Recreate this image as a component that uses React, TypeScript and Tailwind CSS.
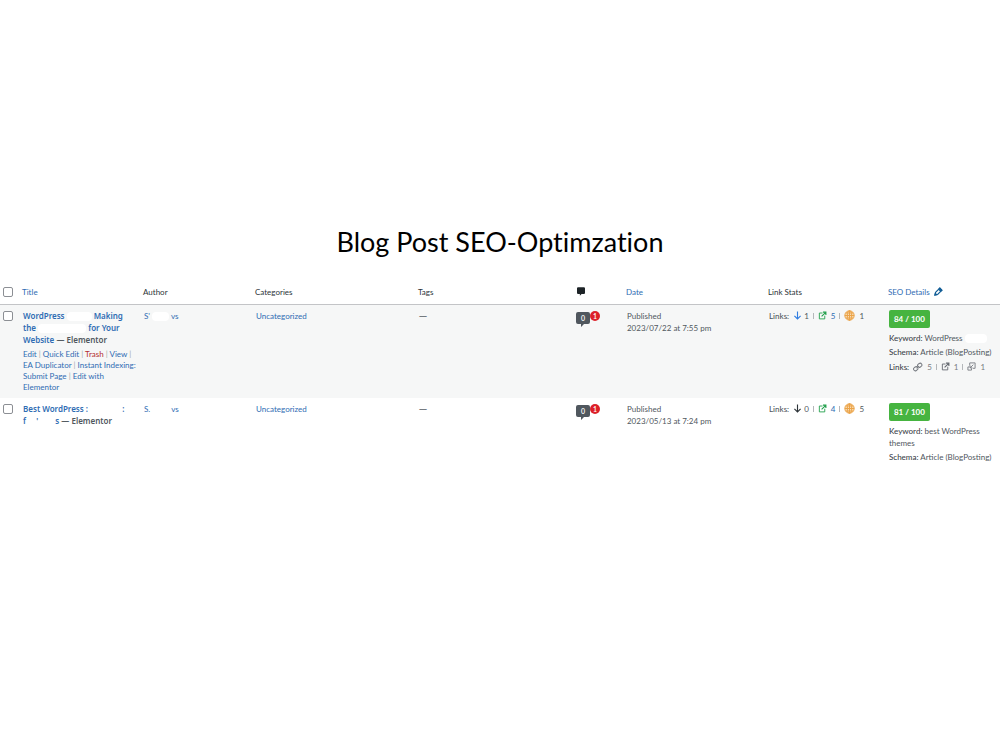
import type { ReactNode } from "react";

const Gap = ({ className }: { className: string }) => (
  <span className={`inline-block h-[9px] rounded-sm bg-white align-middle ${className}`} />
);

const Sep = () => <span className="text-[#a7aaad]"> | </span>;

const Bar = () => <span className="h-[6px] w-px bg-[#b4b7ba]" />;

const DownArrow = ({ className }: { className: string }) => (
  <svg viewBox="0 0 16 16" className={`size-[9px] ${className}`} fill="none" stroke="currentColor" strokeWidth="2">
    <path d="M8 1v13M2.500 8.500 8 14l5.500-5.500" />
  </svg>
);

const ExternalIcon = ({ className }: { className: string }) => (
  <svg viewBox="0 0 20 20" className={`size-[9px] ${className}`} fill="none" stroke="currentColor">
    <path d="M10 4.500H3v13h12v-7" strokeWidth="2" />
    <path d="M8 12 16 4M11 2.500h6.500V9" strokeWidth="2.500" />
  </svg>
);

const InboundIcon = () => (
  <svg viewBox="0 0 20 20" className="size-[9px]" fill="none" stroke="currentColor" strokeWidth="2">
    <path d="M6 8V2h12v12h-5M6 11H2v7h8v-4M14 6l-7 7M7 8v5h5" />
  </svg>
);

const GlobeIcon = () => (
  <svg viewBox="0 0 20 20" className="size-[11px]" fill="none" stroke="#eba348" strokeWidth="1.800">
    <circle cx="10" cy="10" r="8.500" fill="#f8dcb4" />
    <ellipse cx="10" cy="10" rx="4" ry="8.500" />
    <path d="M10 1v18M1.500 10h17M3 5.500h14M3 14.500h14" />
  </svg>
);

const LinkIcon = () => (
  <svg viewBox="0 0 20 20" className="size-[10px]" fill="none" stroke="currentColor" strokeWidth="2">
    <rect x="1" y="10" width="9" height="7" rx="3.500" transform="rotate(-35 5.500 13.500)" />
    <rect x="9" y="3" width="9" height="7" rx="3.500" transform="rotate(-35 13.500 6.500)" />
    <path d="m7 12 5-4" />
  </svg>
);

const PencilIcon = () => (
  <svg viewBox="0 0 20 20" className="size-[9px]" fill="none" stroke="#135e96" strokeWidth="2.500">
    <path d="m2 18 1.500-6L13 2.500l4.500 4.500L8 16.500z" />
    <path d="m10.500 5 4.500 4.500L17.500 7 13 2.500z" fill="#135e96" />
    <path d="m2 18 1-4 3 3z" fill="#135e96" />
  </svg>
);

const CommentIcon = ({ className }: { className: string }) => (
  <svg viewBox="0 0 14 15" className={className} fill="currentColor">
    <path d="M2 0h10a2 2 0 0 1 2 2v8a2 2 0 0 1-2 2H8l-3 3v-3H2a2 2 0 0 1-2-2V2a2 2 0 0 1 2-2z" />
  </svg>
);

const Checkbox = ({ label }: { label: string }) => (
  <input
    type="checkbox"
    aria-label={label}
    className="block size-[10px] appearance-none rounded-[2px] border border-[#8c8f94] bg-white checked:bg-[#2271b1]"
  />
);

const A = ({ children, className = "text-[#2f6cb3]" }: { children: ReactNode; className?: string }) => (
  <a href="#" className={className}>
    {children}
  </a>
);

const posts = [
  {
    id: 1,
    title: (
      <>
        <A>
          WordPress <Gap className="w-[25px]" /> Making
          <br />
          the <Gap className="w-[48px]" /> for Your
          <br />
          Website
        </A>{" "}
        — Elementor
      </>
    ),
    actions: true,
    author: ["S'", "vs"],
    time: "2023/07/22 at 7:55 pm",
    arrow: "text-[#2f7de1]",
    links: [1, 5, 1],
    score: "84 / 100",
    keyword: (
      <>
        WordPress <Gap className="w-[22px]" />
      </>
    ),
    seoLinks: [5, 1, 1],
  },
  {
    id: 2,
    title: (
      <>
        <A>
          Best WordPress : <Gap className="w-[30px]" /> :
          <br />
          f <Gap className="w-[6px]" /> ' <Gap className="w-[13px]" /> s
        </A>{" "}
        — Elementor
      </>
    ),
    actions: false,
    author: ["S.", "vs"],
    time: "2023/05/13 at 7:24 pm",
    arrow: "text-[#2c3338]",
    links: [0, 4, 5],
    score: "81 / 100",
    keyword: (
      <>
        best WordPress
        <br />
        themes
      </>
    ),
    seoLinks: null,
  },
];

const App = () => {
  return (
    <div className="min-h-screen bg-white pt-[224px] font-['Lato',sans-serif] text-[8px] leading-[12px] text-[#50575e]">
      <h1 className="text-center text-[27px] leading-[36px] text-black [font-variant-ligatures:none]">
        Blog Post SEO-Optimzation
      </h1>
      <table className="mt-[20px] w-full table-fixed border-collapse text-left">
        <colgroup>
          <col className="w-[1.900%]" />
          <col className="w-[12.100%]" />
          <col className="w-[11.200%]" />
          <col className="w-[16.300%]" />
          <col className="w-[15.700%]" />
          <col className="w-[5.100%]" />
          <col className="w-[14.200%]" />
          <col className="w-[12%]" />
          <col />
        </colgroup>
        <thead>
          <tr className="h-[24px] border-b border-[#c3c4c7] text-[#2c3338] *:p-0 *:pl-[3px] *:font-normal">
            <th>
              <Checkbox label="Select all" />
            </th>
            <th>
              <A>Title</A>
            </th>
            <th>Author</th>
            <th>Categories</th>
            <th>Tags</th>
            <th aria-label="Comments">
              <CommentIcon className="ml-[2px] h-[9px] w-[8px] text-[#1d2327]" />
            </th>
            <th>
              <A>Date</A>
            </th>
            <th>Link Stats</th>
            <th>
              <div className="flex items-center gap-1">
                <A>SEO Details</A>
                <PencilIcon />
              </div>
            </th>
          </tr>
        </thead>
        <tbody>
          {posts.map((post) => (
            <tr
              key={post.id}
              className="align-top odd:bg-[#f6f7f7] *:p-0 *:pt-[5px] *:pb-[5px] *:pl-[4px] *:first:pt-[6px] *:first:pl-[3px]">
              <td>
                <Checkbox label={`Select post ${post.id}`} />
              </td>
              <td className="whitespace-nowrap">
                <strong className="block font-['Noto_Sans',sans-serif] font-semibold">{post.title}</strong>
                {post.actions && (
                  <div className="mt-[3px] leading-[11px]">
                    <A>Edit</A>
                    <Sep />
                    <A>Quick Edit</A>
                    <Sep />
                    <A className="text-[#b32d2e]">Trash</A>
                    <Sep />
                    <A>View</A>
                    <Sep />
                    <br />
                    <A>EA Duplicator</A>
                    <Sep />
                    <A>
                      Instant Indexing:
                      <br />
                      Submit Page
                    </A>
                    <Sep />
                    <A>
                      Edit with
                      <br />
                      Elementor
                    </A>
                  </div>
                )}
              </td>
              <td>
                <A>
                  {post.author[0]} <Gap className="w-[17px]" /> {post.author[1]}
                </A>
              </td>
              <td>
                <A>Uncategorized</A>
              </td>
              <td className="font-['Noto_Sans',sans-serif]">—</td>
              <td>
                <div className="relative w-[24px]">
                  <CommentIcon className="mt-[2px] h-[15px] w-[14px] text-[#50575e]" />
                  <span className="absolute top-0 left-0 w-[14px] text-center text-[7px] leading-[12px] font-semibold text-white">
                    0
                  </span>
                  <span className="absolute -top-[1px] right-0 size-[10px] rounded-full bg-[#dc2028] text-center text-[7px] leading-[10px] font-semibold text-white">
                    1
                  </span>
                </div>
              </td>
              <td>
                Published
                <br />
                {post.time}
              </td>
              <td>
                <div className="flex items-center gap-1">
                  <span className="font-medium">Links:</span>
                  <span className="flex items-center gap-[2px]">
                    <DownArrow className={post.arrow} />
                    {post.links[0]}
                  </span>
                  <Bar />
                  <ExternalIcon className="text-[#22a04c]" />
                  <A>{post.links[1]}</A>
                  <Bar />
                  <GlobeIcon />
                  {post.links[2]}
                </div>
              </td>
              <td className="whitespace-nowrap">
                <span className="block w-fit rounded-[2px] bg-[#46b440] px-[5px] py-[3px] font-bold text-white">
                  {post.score}
                </span>
                <p className="mt-[4px]">
                  <b className="font-medium text-[#3c434a]">Keyword:</b> {post.keyword}
                </p>
                <p className="mt-[2px]">
                  <b className="font-medium text-[#3c434a]">Schema:</b> Article (BlogPosting)
                </p>
                {post.seoLinks && (
                  <div className="mt-[3px] flex items-center gap-[4px] text-[#787c82]">
                    <b className="font-medium text-[#3c434a]">Links:</b>
                    <LinkIcon />
                    <span>{post.seoLinks[0]}</span>
                    <Bar />
                    <ExternalIcon className="text-[#646970]" />
                    <span>{post.seoLinks[1]}</span>
                    <Bar />
                    <InboundIcon />
                    <span>{post.seoLinks[2]}</span>
                  </div>
                )}
              </td>
            </tr>
          ))}
        </tbody>
      </table>
    </div>
  );
};

export default App;
